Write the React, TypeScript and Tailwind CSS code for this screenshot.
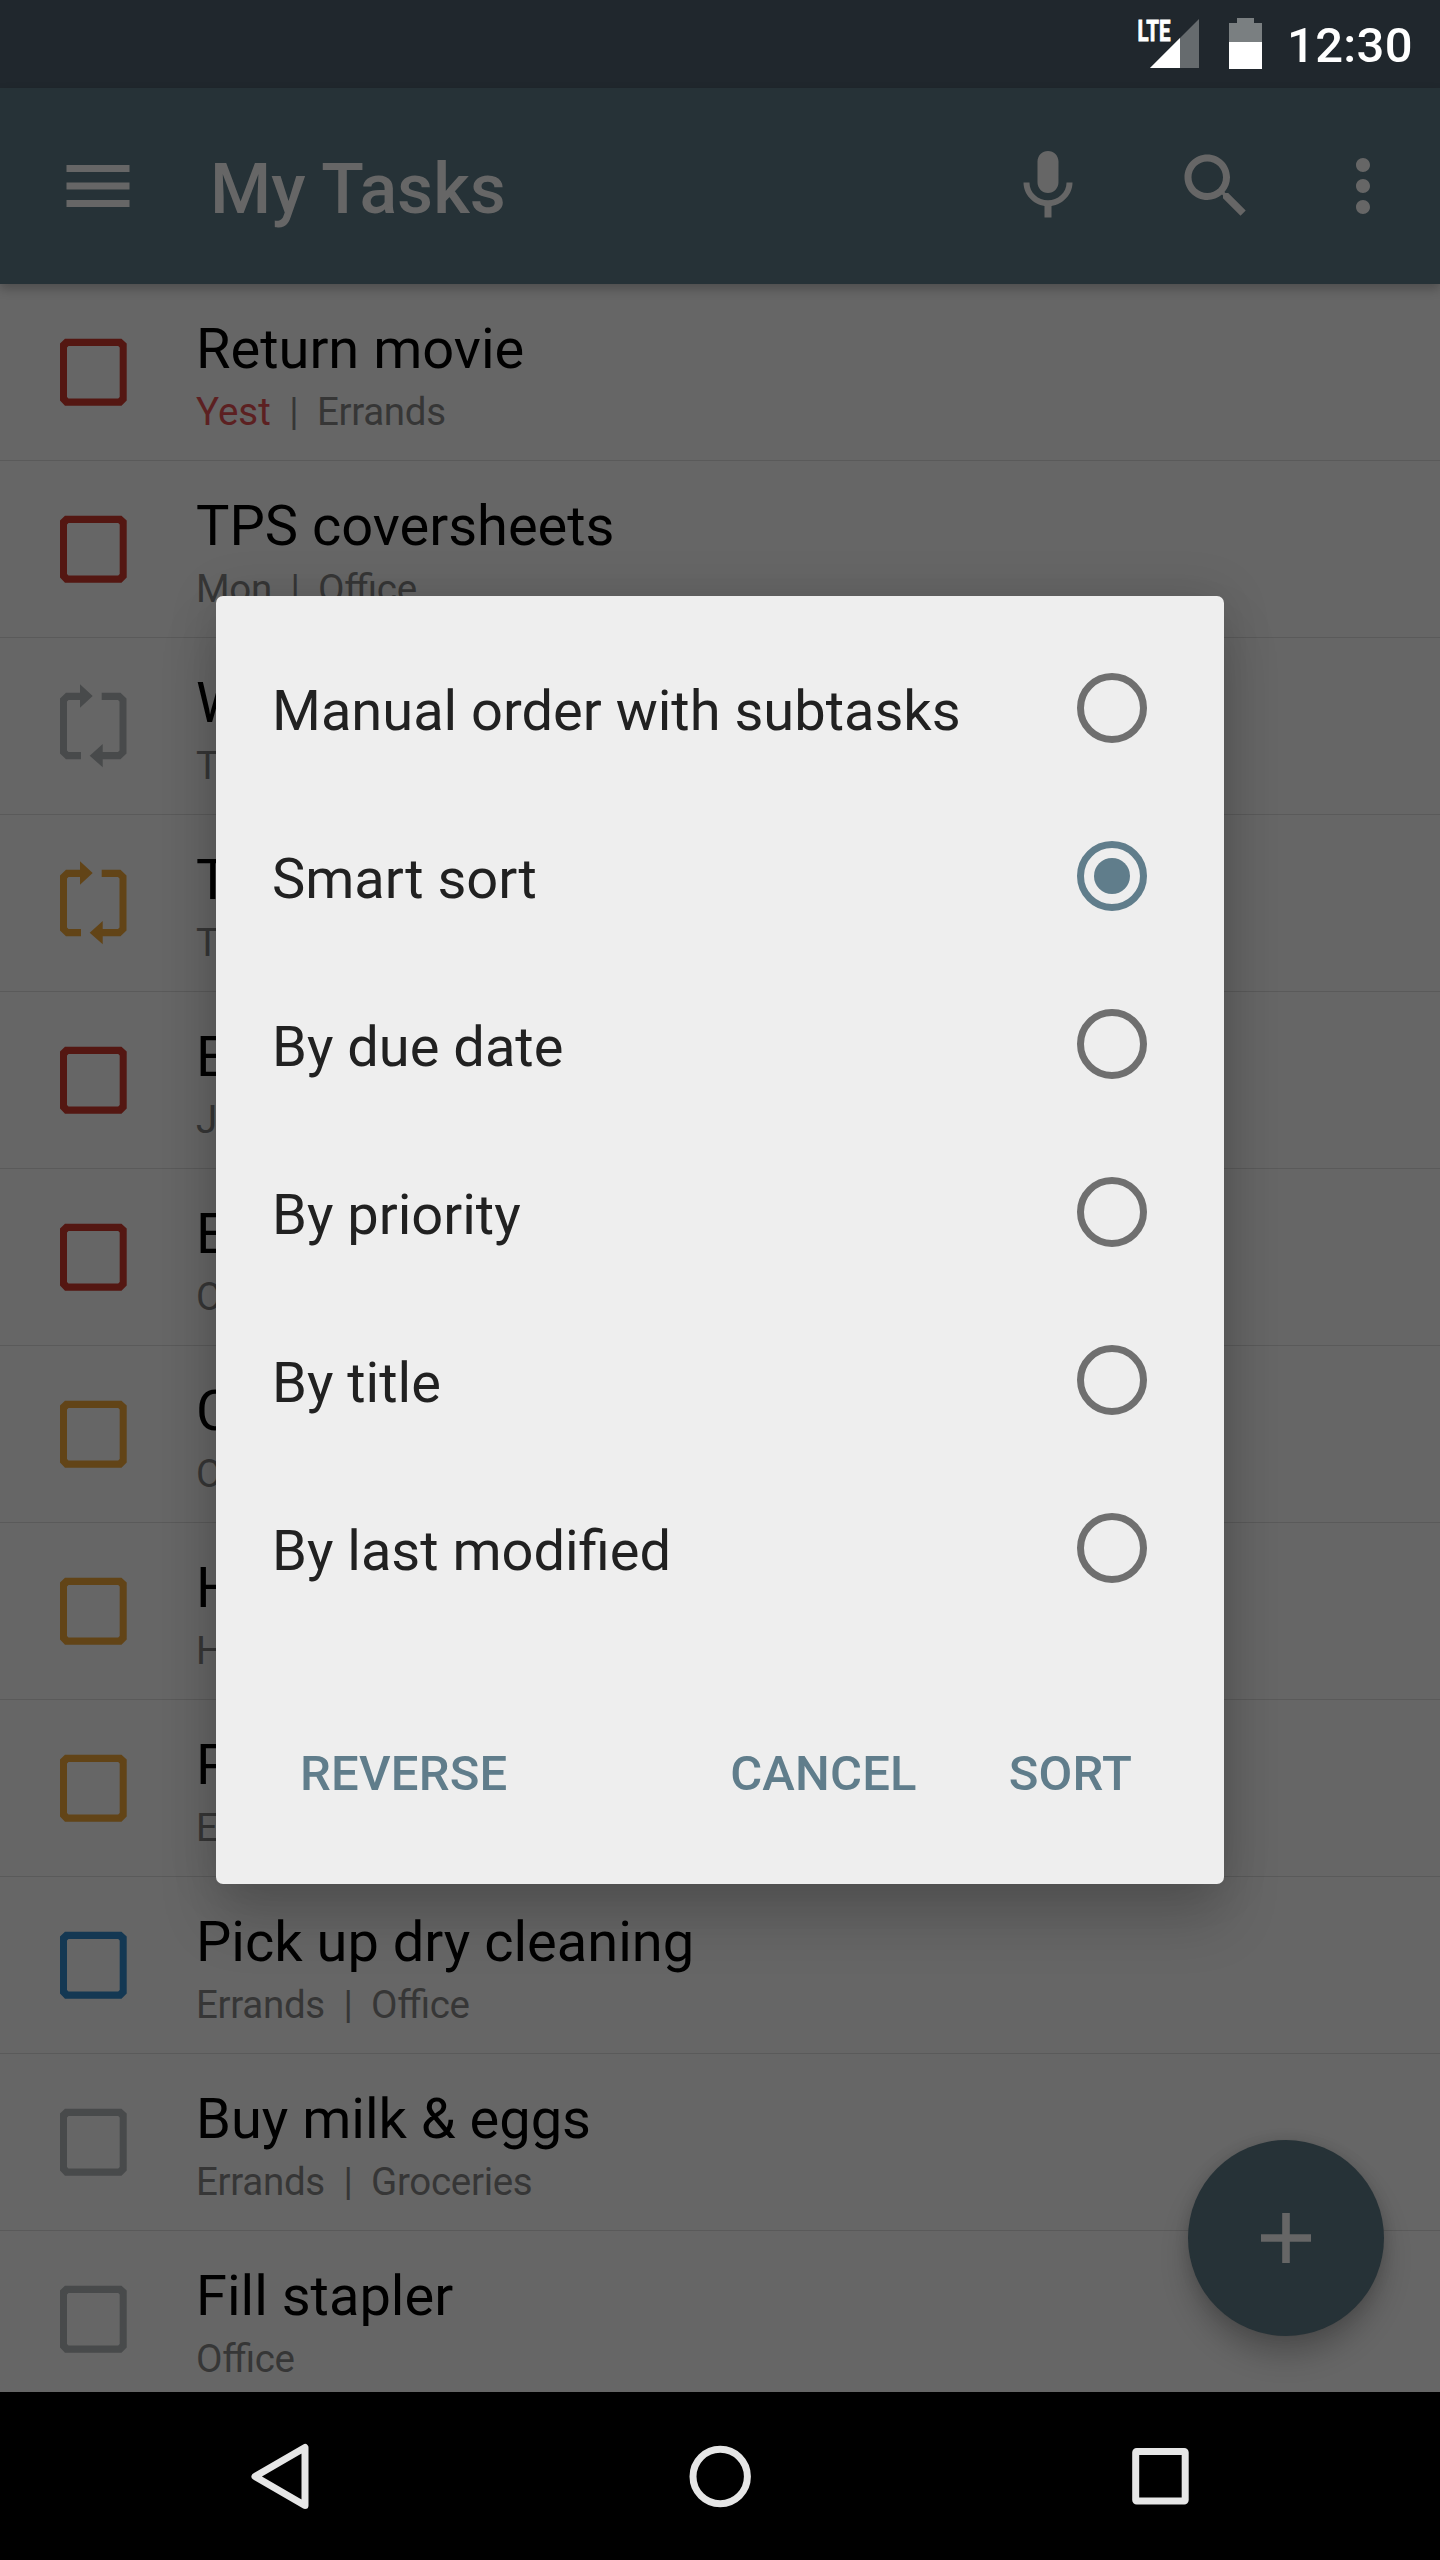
import React from 'react';

const red = '#541712';
const amber = '#624417';
const blue = '#143853';
const gray = '#484a4b';

type Task = { title: string; due?: string; meta: string; color: string; repeat?: boolean };

const tasks: Task[] = [
  { title: 'Return movie', due: 'Yest', meta: 'Errands', color: red },
  { title: 'TPS coversheets', meta: 'Mon  |  Office', color: red },
  { title: 'W', meta: 'T', color: gray, repeat: true },
  { title: 'T', meta: 'T', color: amber, repeat: true },
  { title: 'E', meta: 'J', color: red },
  { title: 'E', meta: 'O', color: red },
  { title: 'C', meta: 'O', color: amber },
  { title: 'H', meta: 'H', color: amber },
  { title: 'P', meta: 'E', color: amber },
  { title: 'Pick up dry cleaning', meta: 'Errands  |  Office', color: blue },
  { title: 'Buy milk & eggs', meta: 'Errands  |  Groceries', color: gray },
  { title: 'Fill stapler', meta: 'Office', color: gray },
];

const options = [
  'Manual order with subtasks',
  'Smart sort',
  'By due date',
  'By priority',
  'By title',
  'By last modified',
];

function TaskIcon({ color, repeat }: { color: string; repeat?: boolean }) {
  return (
    <svg width="84" height="84" viewBox="0 0 84 84" className="ml-[51px] mt-[46px] shrink-0">
      {repeat ? (
        <g fill={color}>
          <path d="M15 8.700H29V0.300L41.700 12L29 23.700V16H17.500L16 17.500V66.500L17.500 68H30V75.300H15L9 69.500V14.500Z" />
          <path d="M50.700 8.700H69.500L75.500 14.500V69.500L69.500 75.300H51.700V83.300L38.700 71.700L51.700 60V68H67L68.500 66.500V17.500L67 16H50.700Z" />
        </g>
      ) : (
        <path
          d="M14 8.700H70.500L75.700 13.500V70.500L70.500 75.700H14L9 70.500V13.500ZM17.500 16L16 17.500V67L17.500 68.500H67.200L68.700 67V17.500L67.200 16Z"
          fill={color}
          fillRule="evenodd"
        />
      )}
    </svg>
  );
}

function Radio({ checked }: { checked: boolean }) {
  return (
    <span
      className={
        'flex size-[70px] items-center justify-center rounded-full border-[7px] ' +
        (checked ? 'border-[#607d8b]' : 'border-[#6f6f6f]')
      }
    >
      {checked && <span className="size-[36px] rounded-full bg-[#607d8b]" />}
    </span>
  );
}

export default function App() {
  return (
    <div className="relative flex h-[2560px] w-[1440px] flex-col overflow-hidden bg-[#666666] font-['Roboto',sans-serif]">
      <header className="flex h-[88px] shrink-0 items-center justify-end bg-[#20272d] text-white">
        <svg width="70" height="88" viewBox="0 0 70 88" className="mr-[23px]">
          <path d="M14 68 L63 19 V68Z" fill="#666b6e" />
          <path d="M14 68 L44 38 V68Z" fill="#fff" />
          <text
            x="1.500"
            y="41"
            fontSize="29"
            fontWeight="700"
            fill="#fff"
            stroke="#fff"
            strokeWidth="0.900"
            textLength="33"
            lengthAdjust="spacingAndGlyphs"
          >
            LTE
          </text>
        </svg>
        <svg width="33" height="88" viewBox="0 0 33 88" className="mr-[25px]">
          <path d="M0 23H8V18H25V23H33V42H0Z" fill="#7a7f81" />
          <path d="M0 42H33V69H0Z" fill="#fff" />
        </svg>
        <span className="mr-[28px] w-[125px] whitespace-nowrap pt-[4px] text-[49px] font-medium leading-[88px] tracking-[0.3px]">
          12:30
        </span>
      </header>

      <div className="relative z-10 flex h-[196px] shrink-0 items-center bg-[#263237] text-[#666666] shadow-[0_5px_10px_rgba(0,0,0,0.24)]">
        <svg width="64" height="42" viewBox="0 0 64 42" className="ml-[66px]" fill="currentColor">
          <path d="M0.500 0H63.500V7H0.500ZM0.500 17.500H63.500V24.500H0.500ZM0.500 35H63.500V42H0.500Z" />
        </svg>
        <h1 className="ml-[80px] grow pt-[6px] text-[70px] font-medium leading-[82px]">My Tasks</h1>
        <svg width="84" height="84" viewBox="0 0 24 24" className="mr-[84px]" fill="currentColor">
          <path d="M12 14c1.660 0 2.990-1.340 2.990-3L15 5c0-1.660-1.340-3-3-3S9 3.340 9 5v6c0 1.660 1.340 3 3 3zm5.300-3c0 3-2.540 5.100-5.300 5.100S6.700 14 6.700 11H5c0 3.410 2.720 6.230 6 6.720V21h2v-3.280c3.280-.480 6-3.300 6-6.720h-1.700z" />
        </svg>
        <svg width="84" height="84" viewBox="0 0 24 24" className="mr-[63px]" fill="currentColor">
          <path d="M15.500 14h-.790l-.280-.270C15.410 12.590 16 11.110 16 9.500 16 5.910 13.090 3 9.500 3S3 5.910 3 9.500 5.910 16 9.500 16c1.610 0 3.090-.590 4.230-1.570l.270.280v.790l5 4.990L20.490 19l-4.990-5zm-6 0C7.010 14 5 11.990 5 9.500S7.010 5 9.500 5 14 7.010 14 9.500 11.990 14 9.500 14z" />
        </svg>
        <svg width="84" height="84" viewBox="0 0 24 24" className="mr-[35px]" fill="currentColor">
          <path d="M12 8c1.100 0 2-.900 2-2s-.900-2-2-2-2 .900-2 2 .900 2 2 2zm0 2c-1.100 0-2 .900-2 2s.900 2 2 2 2-.900 2-2-.900-2-2-2zm0 6c-1.100 0-2 .900-2 2s.900 2 2 2 2-.900 2-2-.900-2-2-2z" />
        </svg>
      </div>

      <main className="flex min-h-0 grow flex-col overflow-hidden">
        {tasks.map((t, i) => (
          <div key={i} className="flex h-[177px] shrink-0 border-b border-[#5a5a5a]">
            <TaskIcon color={t.color} repeat={t.repeat} />
            <div className="ml-[61px] flex flex-col pt-[32px]">
              <span className="text-[56px] leading-[66px] text-black">{t.title}</span>
              <span className="mt-[7px] whitespace-pre text-[38.5px] leading-[46px] tracking-[-0.3px] text-[#363636] [font-feature-settings:'liga'_1]">
                {t.due && (
                  <>
                    <span className="tracking-normal text-[#5c2021]">{t.due}</span>
                    {'  |  '}
                  </>
                )}
                {t.meta}
              </span>
            </div>
          </div>
        ))}
      </main>

      <button className="absolute left-[1188px] top-[2140px] flex size-[196px] items-center justify-center rounded-full bg-[#263237] text-[#666666] shadow-[0_20px_28px_rgba(0,0,0,0.22),0_0_14px_rgba(0,0,0,0.12)]">
        <svg width="50" height="50" viewBox="0 0 50 50" fill="currentColor">
          <path d="M21.200 0H28.800V21.200H50V28.800H28.800V50H21.200V28.800H0V21.200H21.200Z" />
        </svg>
      </button>

      <section className="absolute left-[216px] top-[596px] z-20 flex h-[1288px] w-[1008px] flex-col rounded-[7px] bg-[#eeeeee] pt-[28px] shadow-[0_36px_56px_rgba(0,0,0,0.17),0_0_50px_rgba(0,0,0,0.13)]">
        {options.map((o) => (
          <label key={o} className="flex h-[168px] items-center justify-between pl-[56px] pr-[77px]">
            <span className="pt-[6px] text-[56px] leading-[66px] text-[#212121]">{o}</span>
            <Radio checked={o === 'Smart sort'} />
          </label>
        ))}
        <div className="mt-[113px] flex pl-[84px] pr-[92px] text-[49px] font-medium leading-[58px] tracking-[0.2px] text-[#607d8b]">
          <button className="mr-auto">REVERSE</button>
          <button className="mr-[92px]">CANCEL</button>
          <button>SORT</button>
        </div>
      </section>

      <nav className="relative z-10 flex h-[168px] shrink-0 items-center bg-black">
        <svg width="1440" height="168" viewBox="0 0 1440 168" fill="none" stroke="#e6e6e6" strokeWidth="7" strokeLinejoin="round">
          <path d="M305 55.500V113.500L255 84.500Z" />
          <circle cx="720.200" cy="84.500" r="27.200" />
          <rect x="1135.700" y="59.500" width="49.500" height="49.500" rx="1" />
        </svg>
      </nav>
    </div>
  );
}
